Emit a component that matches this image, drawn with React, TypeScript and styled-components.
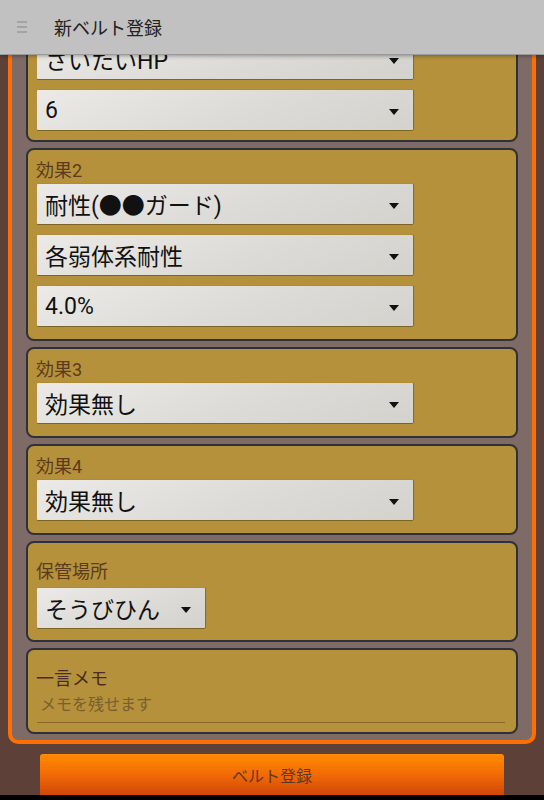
import React from 'react';
import styled, { createGlobalStyle } from 'styled-components';

const Global = createGlobalStyle`
  html, body {
    margin: 0;
    padding: 0;
    background: #5d4038;
  }
  body {
    font-family: Roboto, "Noto Sans CJK JP", sans-serif;
  }
`;

const Screen = styled.div`
  width: 544px;
  height: 800px;
  display: flex;
  flex-direction: column;
  overflow: hidden;
  background: #5d4038;
`;

const Header = styled.header`
  position: relative;
  z-index: 2;
  flex: 0 0 54px;
  display: flex;
  align-items: center;
  background: #c1c1c1;
  box-shadow: 0 1px 0 #9a9a9a, 0 2px 4px rgba(0, 0, 0, 0.35);
`;

const Menu = styled.div`
  width: 54px;
  display: flex;
  padding-left: 17px;
  box-sizing: border-box;
`;

const Title = styled.h1`
  margin: 0;
  font-size: 18px;
  font-weight: 400;
  color: #222;
`;

// the form is scrolled: the first card runs up under the header
const Scroll = styled.div`
  flex: 1;
  overflow: hidden;
  padding: 0 8px;
`;

const Panel = styled.div`
  margin-top: -35px;
  border: 4px solid #ff7000;
  border-radius: 10px;
  background: #7e6a66;
  padding: 6px 14px 6px;
  display: flex;
  flex-direction: column;
  gap: 6px;
`;

const Card = styled.section<{ $top?: number; $bottom?: number }>`
  border: 2px solid #2e3236;
  border-radius: 8px;
  background: #b5913b;
  padding: ${(p) => p.$top ?? 8}px 9px ${(p) => p.$bottom ?? 12}px;
  display: flex;
  flex-direction: column;
  align-items: flex-start;
`;

const Label = styled.div<{ $gap?: number; $dark?: boolean }>`
  height: 26px;
  line-height: 26px;
  margin: 0 0 ${(p) => p.$gap ?? 0}px -1px;
  font-size: 18px;
  color: ${(p) => (p.$dark ? '#4a2c24' : '#5c3b1c')};
`;

const Select = styled.div<{ $wide?: boolean }>`
  box-sizing: border-box;
  width: ${(p) => (p.$wide ? '376px' : 'auto')};
  height: 40px;
  margin-bottom: 1px;
  display: flex;
  align-items: center;
  justify-content: space-between;
  padding: 0 14px 0 8px;
  border-radius: 1px;
  background: linear-gradient(160deg, #ebeae7 0%, #dcdbd7 55%, #d3d2cd 100%);
  box-shadow: 0 1px 0 #7c6423, 1px 0 1px rgba(90, 70, 20, 0.5);
  font-size: 23px;
  color: #111;
  & + & {
    margin-top: 10px;
  }
`;

const Value = styled.span<{ $gap?: number }>`
  white-space: nowrap;
  margin-right: ${(p) => p.$gap ?? 0}px;
`;

const Arrow = styled.span`
  width: 0;
  height: 0;
  margin-top: 3px;
  border-left: 5px solid transparent;
  border-right: 5px solid transparent;
  border-top: 6px solid #111;
`;

const Memo = styled.div`
  align-self: stretch;
  margin: 2px 2px 9px 0;
  padding: 0 0 6px 3px;
  border-bottom: 1px solid #86692b;
  font-size: 16px;
  line-height: 22px;
  color: #77602f;
`;

const Submit = styled.button`
  display: block;
  width: 464px;
  height: 46px;
  margin: 10px auto 0;
  border: none;
  border-radius: 3px 3px 0 0;
  background: linear-gradient(to bottom, #ff8c00 0%, #f26a05 45%, #c63f0c 100%);
  font-family: inherit;
  font-size: 16px;
  color: #623722;
  padding-bottom: 6px;
`;

const NavBar = styled.div`
  flex: 0 0 5px;
  background: #000;
`;

function Dropdown({ value, wide = true, gap }: { value: string; wide?: boolean; gap?: number }) {
  return (
    <Select $wide={wide}>
      <Value $gap={gap}>{value}</Value>
      <Arrow />
    </Select>
  );
}

export default function App() {
  return (
    <Screen>
      <Global />
      <Header>
        <Menu>
          <svg width="10" height="14" viewBox="0 0 10 14">
            <rect x="0" y="1" width="10" height="2" fill="#a3a3a3" />
            <rect x="0" y="6" width="10" height="2" fill="#a3a3a3" />
            <rect x="0" y="11" width="10" height="2" fill="#a3a3a3" />
          </svg>
        </Menu>
        <Title>新ベルト登録</Title>
      </Header>
      <Scroll>
        <Panel>
          <Card $bottom={9}>
            <Dropdown value="さいたいHP" />
            <Dropdown value="6" />
          </Card>
          <Card>
            <Label>効果2</Label>
            <Dropdown value="耐性(●●ガード)" />
            <Dropdown value="各弱体系耐性" />
            <Dropdown value="4.0%" />
          </Card>
          <Card>
            <Label>効果3</Label>
            <Dropdown value="効果無し" />
          </Card>
          <Card>
            <Label>効果4</Label>
            <Dropdown value="効果無し" />
          </Card>
          <Card $top={16} $bottom={11}>
            <Label $gap={3}>保管場所</Label>
            <Dropdown value="そうびひん" wide={false} gap={21} />
          </Card>
          <Card $top={16} $bottom={0}>
            <Label $dark>一言メモ</Label>
            <Memo>メモを残せます</Memo>
          </Card>
        </Panel>
        <Submit>ベルト登録</Submit>
      </Scroll>
      <NavBar />
    </Screen>
  );
}
